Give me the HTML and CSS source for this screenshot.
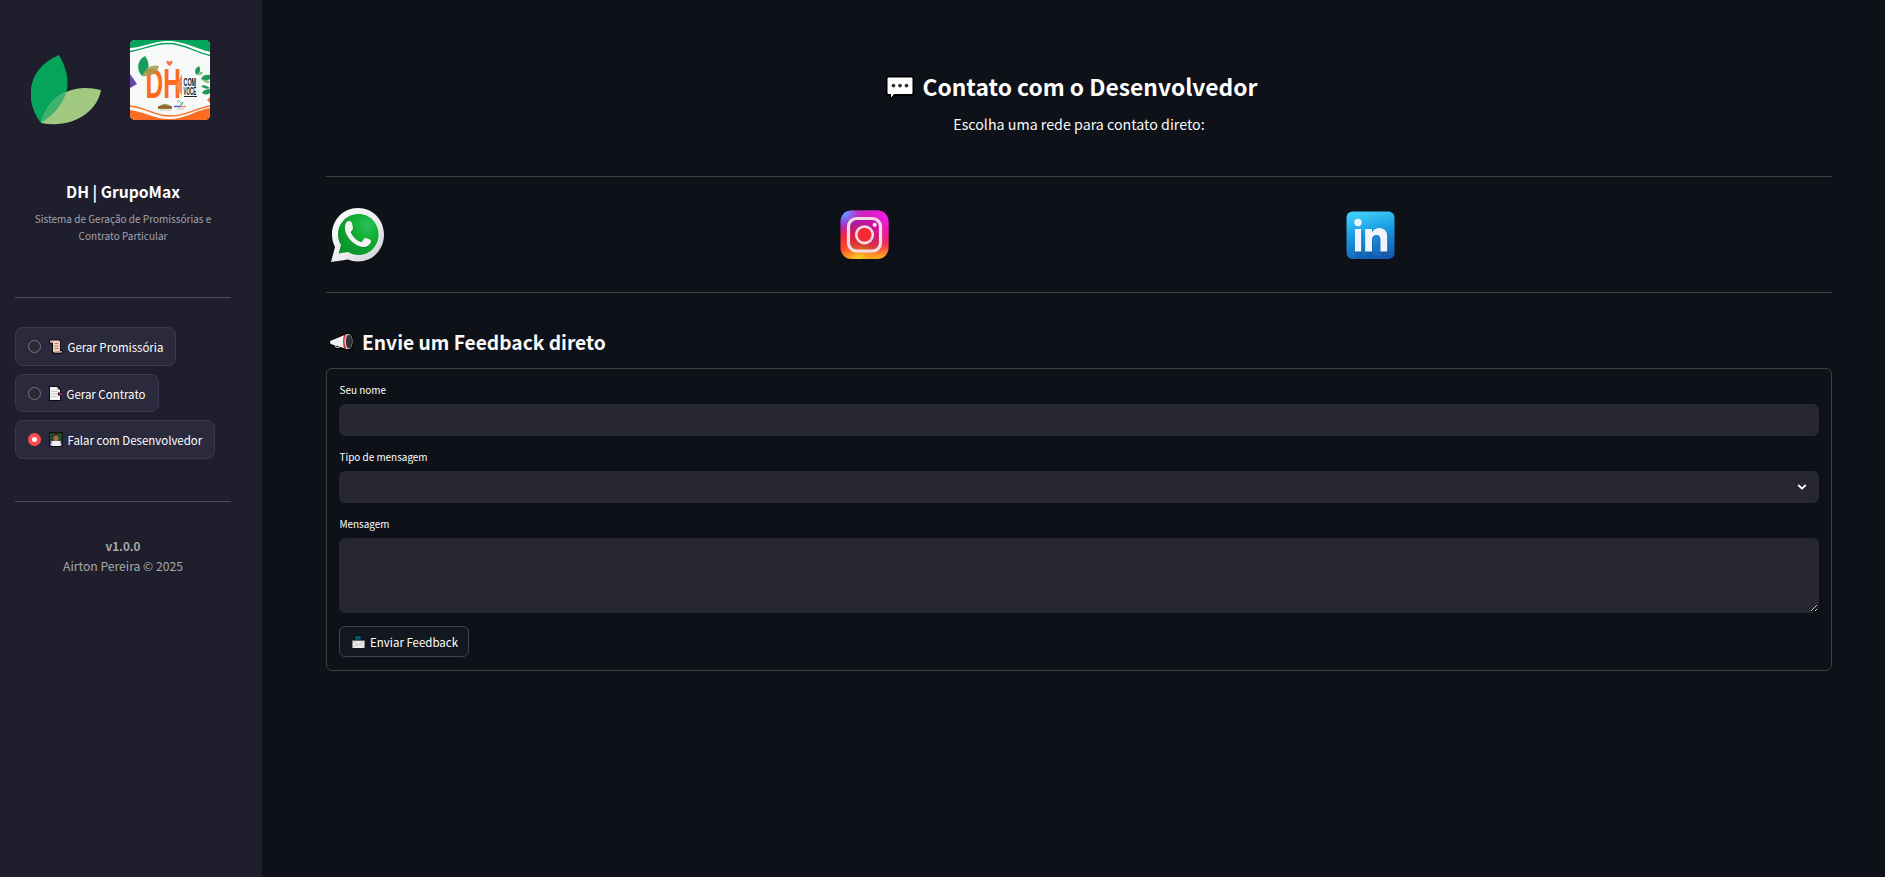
FILE: index.html
```html
<!DOCTYPE html>
<html lang="pt-BR">
<head>
<meta charset="utf-8">
<title>DH | GrupoMax</title>
<link rel="stylesheet" href="styles.css">
</head>
<body>
<div class="app">
  <aside class="sidebar">
    <div class="logos">
      <svg class="leaf" viewBox="0 0 70 70">
        <defs><clipPath id="leafclip"><path d="M28 0C35 12 39 26 35 38C31 51 20 62 10 68C-6 48 -6 14 28 0Z"/></clipPath></defs>
        <path d="M28 0C35 12 39 26 35 38C31 51 20 62 10 68C-6 48 -6 14 28 0Z" fill="#05a45b"/>
        <path d="M70 35C66 58 40 74 10 68C14 52 24 41 35 37C46 32 58 32 70 35Z" fill="#a2c981"/>
        <path clip-path="url(#leafclip)" d="M70 35C66 58 40 74 10 68C14 52 24 41 35 37C46 32 58 32 70 35Z" fill="#3fb36d"/>
      </svg>
      <svg class="card" viewBox="0 0 80 80">
        <rect width="80" height="80" fill="#f7f8f8"/>
        <path d="M0 0H80V12C63 9 54 2 38 2C24 2 14 8 0 9Z" fill="#05a45b"/>
        <path d="M0 8C14 7 24 1 38 1C54 1 64 8 80 12V17C64 11 54 5 38 5C24 5 13 11 0 14Z" fill="#fff"/>
        <path d="M0 11.500C14 9 24 3.500 38 3.500C54 3.500 62 11 80 15.500" fill="none" stroke="#05a45b" stroke-width="1.300"/>
        <path d="M0 34L7 44L0 48Z" fill="#6744a8"/>
        <path d="M80 57L77 60L80 63Z" fill="#fb6a20"/>
        <path d="M0 70C15 72 24 79 40 79C55 79 64 71 80 68V80H0Z" fill="#fb6c20"/>
        <path d="M0 66C17 68 25 76 40 76C55 76 64 69 80 66" fill="none" stroke="#fb6c20" stroke-width="1.300"/>
        <text class="dh" transform="translate(15.500 58) scale(.57 1)">DH</text>
        <path d="M52 34V56L46 46Z" fill="#fb8a4d"/>
        <path d="M39.500 26C34 22 37 19 39.500 22C42 19 45 22 39.500 26Z" fill="#f27a46"/>
        <path d="M15 16C21 24 19 31 12 36C6 30 7 20 15 16Z" fill="#189e59"/>
        <path d="M29 26C27 34 20 37 12 36C15 28 22 24 29 26Z" fill="#a39a4c" opacity=".85"/>
        <text class="com" transform="translate(53.500 45.500) scale(.47 1)">COM</text>
        <text class="com" transform="translate(53.500 55) scale(.39 1)">VOCÊ</text>
        <path d="M54 56.500H67" stroke="#222"/>
        <g fill="#219a58"><path d="M69 26Q72 31 67 35Q62 30 69 26Z"/><path d="M80 35Q73 34 71 39Q76 42 80 39Z"/><path d="M71 46Q75 44 80 48Q75 50 71 46Z"/><path d="M80 49Q74 49 72 53Q76 56 80 53Z"/></g>
        <path d="M67 35Q69 31 73 32Q72 36 67 35ZM72 40Q77 39 80 42Q77 45 72 40Z" fill="#8fc181"/>
        <path d="M28 67Q35 61 42 67V69H28Z" fill="#7d8f3e"/><path d="M28 67H42" stroke="#b34a35" stroke-width="1.500"/>
        <path d="M47 62Q48 59 50 62T53 62Q53 65 50 65" fill="none" stroke="#56b58a"/>
        <path d="M44 66.500H51" stroke="#4e62b6" stroke-width="1.500"/><path d="M51 66.500H56" stroke="#f28a40" stroke-width="1.500"/><path d="M30 70H41M47 69H54" stroke="#b6a7ac" stroke-width=".7"/>
      </svg>
    </div>
    <h1 class="brand">DH | GrupoMax</h1>
    <p class="tagline">Sistema de Geração de Promissórias e<br>Contrato Particular</p>
    <hr class="rule rule-top">
    <nav class="menu">
      <label class="option"><span class="radio"></span>
        <svg class="emoji" viewBox="0 0 14 15"><path d="M0 .5H10Q12 .5 12 3V11H14V13Q14 15 12 15H5Q3 15 3 13V5H1Q0 4 0 2Z" fill="#0c0c10"/><path d="M1 1.500H10Q11 1.500 11 3V12Q11 13.500 12.500 13.500H5.500Q4 13.500 4 12V4H1.500Z" fill="#f6d3bb"/><path d="M1 2H4V4H2ZM6 12H13V13.500H6Z" fill="#c99f89"/><path d="M5.500 4.500H9.500M5.500 7H9.500M5.500 9.500H9.500" stroke="#a98270"/></svg>
        <span class="text">Gerar Promissória</span></label>
      <label class="option short"><span class="radio"></span>
        <svg class="emoji" viewBox="0 0 14 15"><path d="M0 0H9L12 3V15H0Z" fill="#0c0c10"/><path d="M1 1H8V4H11V14H1Z" fill="#f4f4f4"/><path d="M8 1L11 4H8Z" fill="#bbb"/><path d="M2 5.500H9M2 8H9M2 10.500H8" stroke="#c9c9ce"/><path d="M9 6.500H13V9.500H9Z" fill="#16060f"/><path d="M10 7H13V9H10Z" fill="#e3008c"/></svg>
        <span class="text">Gerar Contrato</span></label>
      <label class="option"><span class="radio on"></span>
        <svg class="emoji" viewBox="0 0 14 15"><rect width="14" height="15" rx="1" fill="#0b100d"/><path d="M1 1H13V10H1Z" fill="#183d22"/><path d="M1 3H13M1 6H13M1 9H13" stroke="#347b3e" stroke-dasharray="2 1"/><path d="M1 14V11Q2 9 5 9H9Q12 9 13 11V14Z" fill="#8263c6"/><rect x="4.500" y="3" width="5" height="7" rx="2.500" fill="#9b694d"/><path d="M4 5Q4 1.500 7 1.500T10 5L8.500 3.500H5.500Z" fill="#44291f"/><rect x="2.500" y="9" width="9" height="5" fill="#eef0ef"/></svg>
        <span class="text">Falar com Desenvolvedor</span></label>
    </nav>
    <hr class="rule rule-bottom">
    <p class="version"><b>v1.0.0</b><br>Airton Pereira © 2025</p>
  </aside>

  <main class="main">
    <h2 class="title">
      <svg class="bubble" viewBox="0 0 28 25"><path d="M2 0H26Q28 0 28 2V18Q28 20 26 20H10L4 25V20H2Q0 20 0 18V2Q0 0 2 0Z" fill="#000"/><path d="M2.500 1.500H25.500Q26.500 1.500 26.500 2.500V17Q26.500 18 25.500 18H8L5 21.500V18H2.500Q1.500 18 1.500 17V2.500Q1.500 1.500 2.500 1.500Z" fill="#fff"/><g fill="#333"><circle cx="7.500" cy="9.600" r="1.900"/><circle cx="14" cy="9.600" r="1.900"/><circle cx="20.500" cy="9.600" r="1.900"/></g></svg>
      <span>Contato com o Desenvolvedor</span>
    </h2>
    <p class="subtitle">Escolha uma rede para contato direto:</p>

    <div class="networks">
      <a class="network"><svg viewBox="0 0 64 64">
        <defs><linearGradient id="wr" x1="0" y1="0" x2="1" y2="1"><stop offset="0" stop-color="#fff"/><stop offset=".6" stop-color="#ebebee"/><stop offset="1" stop-color="#c9cad0"/></linearGradient><radialGradient id="wg" cx=".72" cy=".28" r=".75"><stop offset="0" stop-color="#2cc062"/><stop offset=".35" stop-color="#12b437"/><stop offset="1" stop-color="#0b962d"/></radialGradient></defs>
        <path d="M32 5C47 5 58 17 58 31.500C58 46.500 47 58.500 32 58.500C28 58.500 25 57.500 22 56.500Q14 57.500 5 59L9 44C7 40 6 36 6 31.500C6 17 17 5 32 5Z" fill="url(#wr)"/>
        <path d="M32.500 11C44 11 52.500 20 52.500 31.500S44 52 32.500 52C28.500 52 25 51 22 49L12.500 50.500L15 42C13 39 12 35.500 12 31.500C12 20 21 11 32.500 11Z" fill="url(#wg)"/>
        <path d="M21 21C23 18 26 19 27 21L28 26C28 29 25 29 26 31C28 35 31 38 35 39C37 40 37 35 40 35L45 37C47 39 43 45 38 45C28 45 18 33 19 25Q19.500 23 21 21Z" fill="#087b27" opacity=".5"/>
        <path d="M20 20C22 17 25 18 26 20L27 25C27 28 24 28 25 30C27 34 31 38 35 39C37 39.500 37 34.500 40 35L44 36.500C47 38 43 44 38 44C28 44 18 32 19 24Q19 22 20 20Z" fill="#f4f4f4"/></svg></a>
      <a class="network"><svg viewBox="0 0 64 64">
        <defs><linearGradient id="ib" x1=".1" y1="0" x2=".2" y2="1"><stop offset="0" stop-color="#a34bff"/><stop offset=".25" stop-color="#a424cf"/><stop offset=".52" stop-color="#f52442"/><stop offset=".78" stop-color="#fb4a26"/><stop offset="1" stop-color="#fca321"/></linearGradient><radialGradient id="ip" cx=".95" cy=".1" r=".85"><stop offset="0" stop-color="#f41ae8"/><stop offset=".5" stop-color="#e519b0" stop-opacity=".75"/><stop offset="1" stop-color="#f02070" stop-opacity="0"/></radialGradient><radialGradient id="iy" cx=".38" cy="1" r=".38"><stop offset="0" stop-color="#f8d824"/><stop offset="1" stop-color="#fb7d22" stop-opacity="0"/></radialGradient><radialGradient id="il" cx=".08" cy=".05" r=".3"><stop offset="0" stop-color="#59a4ff"/><stop offset="1" stop-color="#7b74ff" stop-opacity="0"/></radialGradient></defs>
        <g><rect x="8.500" y="7.500" width="48" height="48.500" rx="11" fill="url(#ib)"/><rect x="8.500" y="7.500" width="48" height="48.500" rx="11" fill="url(#ip)"/><rect x="8.500" y="7.500" width="48" height="48.500" rx="11" fill="url(#iy)"/><rect x="8.500" y="7.500" width="48" height="48.500" rx="11" fill="url(#il)"/></g>
        <rect x="16.500" y="15.500" width="32" height="32.500" rx="8" fill="#680052" fill-opacity=".2" stroke="#f2dbe6" stroke-width="3.200"/><circle cx="32.500" cy="31.800" r="8.300" fill="#f42a32" stroke="#f2dbe6" stroke-width="2.600"/><circle cx="42.700" cy="21.800" r="2.100" fill="#ffe5f5"/></svg></a>
      <a class="network last"><svg viewBox="0 0 64 64">
        <defs><linearGradient id="lb" x1=".4" y1="0" x2=".65" y2="1"><stop offset="0" stop-color="#3fcdf6"/><stop offset=".4" stop-color="#1a9ee5"/><stop offset="1" stop-color="#155baf"/></linearGradient></defs>
        <rect x="8.500" y="8.500" width="48" height="47.500" rx="6" fill="url(#lb)"/>
        <path d="M16 48H23L27 56H20ZM27 48H34L38 56H31ZM42 48H49L54 55H46Z" fill="#0d4c9f" opacity=".25"/>
        <g fill="#0c559e" opacity=".45"><path d="M17.500 27H24.500V50H17.500ZM28.500 27H35V30Q38 26 42 26Q50 27 50.500 34V50H43.500V37Q43 33 40 33Q35 33 35 38V50H28.500Z"/></g>
        <g fill="#f1f5fb"><circle cx="20" cy="19.500" r="3.700"/><path d="M17 26H23.200V48.500H17ZM27.200 26H34V29Q37 25 41.500 25Q49 25.500 49.200 33V48.500H42.500V36Q42 32 39 32Q34 32 34 37V48.500H27.200Z"/></g></svg></a>
    </div>

    <h3 class="section-title">
      <svg class="horn" viewBox="0 0 25 20"><path d="M0 9L16 1Q23-1 24 4V15Q23 20 17 18L11 17Q7 20 5 14L1 13Z" fill="#000"/><path d="M6 13Q7 17 11 15" fill="none" stroke="#aaa" stroke-width="1.200"/><path d="M1 9L18 2V17L1.500 12Z" fill="#f1f1f1"/><path d="M15 3L17 2V17L15 16Q13 9 15 3Z" fill="#d9303d"/><ellipse cx="19.500" cy="9.500" rx="4" ry="7.800" fill="#c8c8c8"/><ellipse cx="20" cy="9.500" rx="3.100" ry="6.900" fill="#303036"/></svg>
      <span>Envie um Feedback direto</span>
    </h3>
    <form class="form">
      <label class="field"><span class="label">Seu nome</span><span class="box"></span></label>
      <label class="field"><span class="label">Tipo de mensagem</span><span class="box select"><svg class="chevron" viewBox="0 0 10 6"><path d="M1.200 1L5 4.500L8.800 1" fill="none" stroke="#fff" stroke-width="1.700"/></svg></span></label>
      <label class="field"><span class="label">Mensagem</span><span class="box area"><svg class="grip" viewBox="0 0 8 8"><path d="M1 7.500L7.500 1M5 7.500L7.500 5" stroke="#000" stroke-width="2"/><path d="M1 7L7 1M5 7L7 5" stroke="#ddd" stroke-width="1"/></svg></span></label>
      <button class="send" type="button">
        <svg class="mail" viewBox="0 0 16 15"><path d="M1 5H4V0H11V5H15V15H1Z" fill="#05090c"/><path d="M5.500 1V5M7.500 1V5M9.500 1V5" stroke="#087f9c" stroke-width="1.300"/><path d="M1.500 6H14.500V14H1.500Z" fill="#ececec"/><path d="M1.500 6L8 11L14.500 6M1.500 14L6 10M14.500 14L10 10" fill="none" stroke="#bbb" stroke-width=".8"/></svg>
        <span>Enviar Feedback</span></button>
    </form>
  </main>
</div>
</body>
</html>
```
FILE: styles.css
```css
* { box-sizing: border-box; }
body {
  margin: 0;
  background: #0e1117;
  color: #fafafa;
  font-family: "Noto Sans CJK JP", "Open Sans", sans-serif;
}
h1, h2, h3, p { margin: 0; white-space: nowrap; }
svg { display: block; flex: none; }
.app { display: flex; height: 877px; }

.sidebar { width: 262px; flex: none; padding: 40px 31px 0 15px; background: #1f1e2d; }
.logos { display: flex; height: 85px; padding-left: 16px; gap: 29px; }
.leaf { width: 70px; height: 70px; margin-top: 15px; }
.card { width: 80px; height: 80px; border-radius: 5px; }
.dh { font: 700 43px "Liberation Sans", sans-serif; fill: #fb6c20; }
.com { font: 700 11.500px "Liberation Sans", sans-serif; fill: #17171b; }
.brand { margin-top: 55px; font-size: 15.640px; line-height: 24px; text-align: center; color: #fff; }
.tagline { margin-top: 6px; font-size: 10.020px; line-height: 17px; text-align: center; color: #a3a3ad; }
.rule { height: 1px; margin: 0; border: 0; background: #4c4b57; }
.rule-top { margin-top: 53px; }
.menu { display: flex; flex-direction: column; align-items: flex-start; gap: 8px; margin-top: 29px; }
.option {
  display: flex; align-items: center; height: 39px; padding: 0 12px;
  border: 1px solid #3b3a52; border-radius: 8px; background: #2a2a3c;
  font-size: 11.480px; line-height: 20px; white-space: nowrap; color: #fff;
}
.option .text { padding-top: 1px; }
.option.short { height: 38px; padding-right: 13px; }
.option .emoji { width: 14px; height: 15px; margin: 0 4.500px 0 8px; }
.option.short .emoji { margin-right: 3.500px; }
.radio { width: 13px; height: 13px; border: 1px solid #77777f; border-radius: 50%; background: #292a33; }
.radio.on { border: 4px solid #ff4b4b; background: #fff; }
.rule-bottom { margin-top: 42px; }
.version { margin-top: 34px; font-size: 12.170px; line-height: 20px; text-align: center; color: #a9a9aa; }
.version b { font-size: 11.680px; }

.main { flex: 1; padding: 72px 53px 0 64px; }
.title { display: flex; justify-content: center; gap: 9px; padding-right: 15px; font-size: 22.800px; line-height: 30px; color: #fff; }
.bubble { width: 28px; height: 25px; margin-top: 4px; }
.subtitle { margin-top: 12px; font-size: 14.250px; line-height: 20px; text-align: center; }
.networks {
  display: grid; grid-template-columns: repeat(3, 1fr); column-gap: 13px; align-items: center;
  height: 117px; margin-top: 42px; border: solid #3e4045; border-width: 1px 0;
}
.network svg { width: 64px; height: 64px; }
.network.last { margin-left: -1px; }
.section-title { display: flex; gap: 8px; margin-top: 36px; padding-left: 3px; font-size: 19.220px; line-height: 26px; }
.horn { width: 25px; height: 20px; margin-top: 3px; }
.form {
  display: flex; flex-direction: column; gap: 13px; height: 303px; margin-top: 13px;
  padding: 13px 12px; border: 1px solid #3e4045; border-radius: 6px;
}
.field { display: flex; flex-direction: column; gap: 6px; font-size: 9.930px; line-height: 16px; color: #fff; }
.label { padding-left: .5px; }
.box { display: flex; height: 32px; border-radius: 6px; background: #262730; }
.select { align-items: center; justify-content: flex-end; padding-right: 12px; }
.chevron { width: 10px; height: 6px; }
.area { height: 75px; align-items: flex-end; justify-content: flex-end; padding: 0 1px 1px 0; }
.grip { width: 8px; height: 8px; }
.send {
  display: flex; align-items: center; gap: 4px; width: 130px; height: 32px; padding: 0 11px;
  border: 1px solid #42444b; border-radius: 6px; background: #131720; color: #fff;
  font: 11.490px/20px "Noto Sans CJK JP", sans-serif; white-space: nowrap;
}
.mail { width: 15px; height: 14px; }
```
